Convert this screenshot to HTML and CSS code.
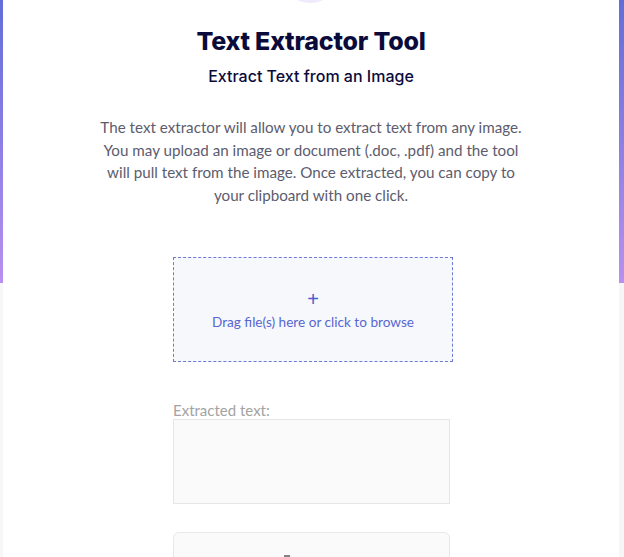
FILE: index.html
```html
<!DOCTYPE html>
<html lang="en">
<head>
<meta charset="utf-8">
<title>Text Extractor Tool</title>
<link rel="stylesheet" href="styles.css">
</head>
<body>
<div class="page">
  <main class="card">
    <div class="badge"></div>
    <h1 class="title">Text Extractor Tool</h1>
    <h2 class="subtitle">Extract Text from an Image</h2>
    <p class="intro">The text extractor will allow you to extract text from any image. You may upload an image or document (.doc, .pdf) and the tool will pull text from the image. Once extracted, you can copy to your clipboard with one click.</p>
    <section class="tool">
      <div class="dropzone">
        <span class="plus">+</span>
        <span class="drop-text">Drag file(s) here or click to browse</span>
      </div>
      <div class="output">
        <label class="output-label" for="out">Extracted text:</label>
        <textarea id="out" class="output-box"></textarea>
      </div>
      <div class="copy-box">
        <span class="copy-icon"></span>
      </div>
    </section>
  </main>
</div>
</body>
</html>
```
FILE: styles.css
```css
html, body {
  margin: 0;
  padding: 0;
}
body {
  background-color: #f7f7f7;
  background-image: linear-gradient(180deg, #626ed8 0%, #8c7fe4 50%, #b890f0 100%);
  background-size: 100% 283px;
  background-repeat: no-repeat;
  height: 557px;
  overflow: hidden;
}
.page {
  padding: 0 5px 0 3px;
}
.card {
  background: #ffffff;
  min-height: 557px;
  display: flex;
  flex-direction: column;
  align-items: center;
  position: relative;
  font-family: "Lato", "Liberation Sans", sans-serif;
}
.badge {
  position: absolute;
  top: -57px;
  left: 50%;
  margin-left: -31px;
  width: 60px;
  height: 60px;
  border-radius: 50%;
  background: #efeafc;
}
.title {
  margin: 26px 0 0;
  font-family: "Inter", sans-serif;
  font-weight: 800;
  font-size: 25px;
  line-height: 30px;
  color: #0b0b3b;
  letter-spacing: -0.2px;
}
.subtitle {
  margin: 10px 0 0;
  font-family: "Inter", sans-serif;
  font-weight: 500;
  font-size: 16px;
  line-height: 20px;
  color: #0b0b3b;
}
.intro {
  margin: 30px 0 0;
  width: 428px;
  text-align: center;
  font-size: 15.2px;
  line-height: 22.6px;
  color: #5c5c6e;
}
.tool {
  margin-left: 4px;
  width: 280px;
  display: flex;
  flex-direction: column;
}
.dropzone {
  margin-top: 51px;
  height: 105px;
  box-sizing: border-box;
  border: 1px dashed #6b7bd6;
  background: #f7f8fc;
  display: flex;
  flex-direction: column;
  align-items: center;
  justify-content: center;
  gap: 4px;
  color: #4a5bcc;
}
.plus {
  font-size: 20px;
  line-height: 20px;
  font-family: "Liberation Sans", sans-serif;
}
.drop-text {
  font-size: 13.6px;
  line-height: 18px;
  color: #5766d0;
}
.output {
  margin-top: 39px;
  width: 277px;
  display: flex;
  flex-direction: column;
}
.output-label {
  font-size: 15px;
  line-height: 18px;
  color: #a3a3a3;
}
.output-box {
  margin: 0;
  height: 85px;
  box-sizing: border-box;
  border: 1px solid #e6e6e6;
  background: #fafafa;
  resize: none;
  padding: 0;
}
.copy-box {
  margin-top: 28px;
  width: 277px;
  height: 60px;
  border: 1px solid #e8e8e8;
  border-radius: 6px;
  background: #fafafa;
  display: flex;
  justify-content: center;
  padding-top: 22px;
  box-sizing: border-box;
}
.copy-icon {
  width: 6px;
  height: 6px;
  background: #8a7f88;
  margin-left: -50px;
}
```
